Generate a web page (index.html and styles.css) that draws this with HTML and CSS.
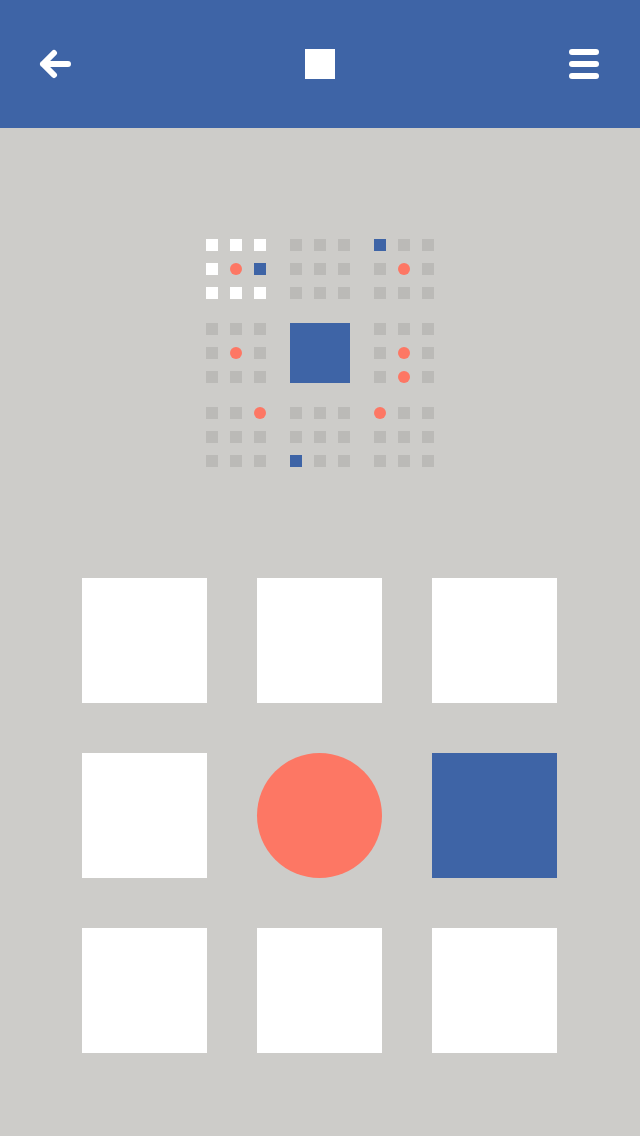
FILE: index.html
```html
<!DOCTYPE html>
<html>
<head>
<meta charset="utf-8">
<link rel="stylesheet" href="styles.css">
</head>
<body>
<header class="bar">
  <svg class="icon" width="32" height="30" viewBox="0 0 32 30"><path d="M4 15 H29 M15 4 L4 15 L15 26" fill="none" stroke="#fff" stroke-width="6" stroke-linecap="round" stroke-linejoin="round"/></svg>
  <div class="logo"></div>
  <div class="menu"><span></span><span></span><span></span></div>
</header>
<main class="content">
  <div class="mini">
    <div class="block">
      <i class="w"></i><i class="w"></i><i class="w"></i>
      <i class="w"></i><i class="d"></i><i class="b"></i>
      <i class="w"></i><i class="w"></i><i class="w"></i>
    </div>
    <div class="block">
      <i></i><i></i><i></i><i></i><i></i><i></i><i></i><i></i><i></i>
    </div>
    <div class="block">
      <i class="b"></i><i></i><i></i>
      <i></i><i class="d"></i><i></i>
      <i></i><i></i><i></i>
    </div>
    <div class="block">
      <i></i><i></i><i></i>
      <i></i><i class="d"></i><i></i>
      <i></i><i></i><i></i>
    </div>
    <div class="center"></div>
    <div class="block">
      <i></i><i></i><i></i>
      <i></i><i class="d"></i><i></i>
      <i></i><i class="d"></i><i></i>
    </div>
    <div class="block">
      <i></i><i></i><i class="d"></i>
      <i></i><i></i><i></i>
      <i></i><i></i><i></i>
    </div>
    <div class="block">
      <i></i><i></i><i></i>
      <i></i><i></i><i></i>
      <i class="b"></i><i></i><i></i>
    </div>
    <div class="block">
      <i class="d"></i><i></i><i></i>
      <i></i><i></i><i></i>
      <i></i><i></i><i></i>
    </div>
  </div>
  <div class="board">
    <div class="tile"></div><div class="tile"></div><div class="tile"></div>
    <div class="tile"></div><div class="tile dot"></div><div class="tile blue"></div>
    <div class="tile"></div><div class="tile"></div><div class="tile"></div>
  </div>
</main>
</body>
</html>
```
FILE: styles.css
```css
html, body {
  margin: 0;
  padding: 0;
  background: #cdccc9;
  width: 640px;
  height: 1136px;
  overflow: hidden;
  font-family: "Liberation Sans", sans-serif;
}
.bar {
  height: 128px;
  background: #3e64a6;
  display: flex;
  align-items: center;
  justify-content: space-between;
  padding: 0 41px 0 39px;
  box-sizing: border-box;
}
.icon { display: block; }
.logo {
  width: 30px;
  height: 30px;
  background: #fff;
}
.menu {
  width: 30px;
  display: flex;
  flex-direction: column;
  gap: 6px;
}
.menu span {
  height: 6px;
  border-radius: 3px;
  background: #fff;
}
.content {
  display: flex;
  flex-direction: column;
  align-items: center;
  padding-top: 111px;
  gap: 111px;
}
.mini {
  display: grid;
  grid-template-columns: repeat(3, 60px);
  grid-template-rows: repeat(3, 60px);
  gap: 24px;
}
.block {
  display: grid;
  grid-template-columns: repeat(3, 12px);
  grid-template-rows: repeat(3, 12px);
  gap: 12px;
}
.block i {
  display: block;
  background: #bbbab7;
}
.block i.w { background: #fff; }
.block i.b { background: #3e64a6; }
.block i.d { background: #fd7764; border-radius: 50%; }
.center { background: #3e64a6; }
.board {
  display: grid;
  grid-template-columns: repeat(3, 125px);
  grid-template-rows: repeat(3, 125px);
  gap: 50px;
  margin-right: 1px;
}
.tile { background: #fff; }
.tile.dot { background: #fd7764; border-radius: 50%; }
.tile.blue { background: #3e64a6; }
```
